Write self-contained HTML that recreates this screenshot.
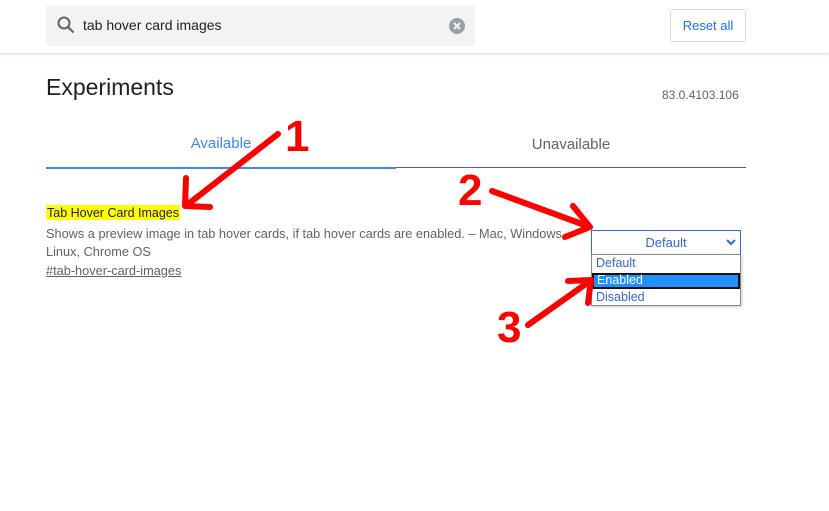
<!DOCTYPE html>
<html><head><style>
body{margin:0;width:829px;height:511px;background:#fff;font-family:"Liberation Sans",Arial,sans-serif;position:relative;overflow:hidden}
.a{position:absolute}
</style></head><body>
<div class="a" style="left:0;top:0;width:829px;height:53px;background:#fff;border-bottom:1px solid #e3e3e3;box-shadow:0 1px 3px rgba(0,0,0,.08)"></div>
<div class="a" style="left:46px;top:5px;width:429px;height:41px;background:#f1f3f4;border-radius:3px"></div>
<svg class="a" style="left:56px;top:15px" width="20" height="20" viewBox="0 0 20 20"><circle cx="8" cy="8" r="5.5" fill="none" stroke="#5f6368" stroke-width="2"/><line x1="12" y1="12" x2="17.5" y2="17.5" stroke="#5f6368" stroke-width="2.2"/></svg>
<div class="a" style="left:83px;top:17px;font-size:14px;color:#202124">tab hover card images</div>
<svg class="a" style="left:448px;top:17px" width="18" height="18" viewBox="0 0 18 18"><circle cx="9" cy="9" r="8" fill="#9aa0a6"/><path d="M6 6L12 12M12 6L6 12" stroke="#f1f3f4" stroke-width="2"/></svg>
<div class="a" style="left:670px;top:9px;width:74px;height:31px;border:1px solid #dadce0;border-radius:3px;color:#1a73e8;font-size:13px;line-height:31px;text-align:center">Reset all</div>
<div class="a" style="left:46px;top:74px;font-size:23px;color:#202124">Experiments</div>
<div class="a" style="left:662px;top:88px;font-size:12px;color:#5f6368">83.0.4103.106</div>
<div class="a" style="left:46px;top:135px;width:350px;text-align:center;font-size:15px;color:#4285f4">Available</div>
<div class="a" style="left:396px;top:136px;width:350px;text-align:center;font-size:15px;color:#5f6368">Unavailable</div>
<div class="a" style="left:46px;top:167px;width:350px;height:2px;background:#4285f4"></div>
<div class="a" style="left:396px;top:167px;width:350px;height:1px;background:#5f6368"></div>
<div class="a" style="left:46px;top:205px;height:15px;padding:0 1px;background:#ffff00;font-size:12.5px;line-height:16px;color:#202124">Tab Hover Card Images</div>
<div class="a" style="left:46px;top:225px;font-size:12.75px;line-height:18px;color:#5f6368;width:560px">Shows a preview image in tab hover cards, if tab hover cards are enabled. – Mac, Windows,<br>Linux, Chrome OS</div>
<div class="a" style="left:46px;top:263px;font-size:12.75px;color:#5f6368;text-decoration:underline">#tab-hover-card-images</div>
<div class="a" style="left:591px;top:230px;border:1px solid #3367d6;box-sizing:border-box;width:150px;height:25px;font-size:13px;color:#3367d6;line-height:23px;text-align:center">Default</div>
<svg class="a" style="left:726px;top:238px" width="10" height="8" viewBox="0 0 10 8"><path d="M1 2L5 6L9 2" fill="none" stroke="#3367d6" stroke-width="2"/></svg>
<div class="a" style="left:591px;top:254px;width:150px;height:52px;border:1px solid #888;box-sizing:border-box;box-shadow:1px 1px 3px rgba(0,0,0,.2);background:#fff"></div>
<div class="a" style="left:596px;top:256px;font-size:12.5px;color:#3367d6">Default</div>
<div class="a" style="left:592px;top:273px;width:148px;height:16px;background:#1e90ff;border:2px solid #111;box-sizing:border-box"></div>
<div class="a" style="left:597px;top:273px;font-size:12.5px;color:#fff">Enabled</div>
<div class="a" style="left:596px;top:290px;font-size:12.5px;color:#3367d6">Disabled</div>
<svg class="a" style="left:0;top:0" width="829" height="511" viewBox="0 0 829 511">
<g stroke="#ff0000" stroke-width="6" fill="none" stroke-linecap="round" stroke-linejoin="round">
<path d="M278 134L187 205M186 178L185 206L210 207"/>
<path d="M492 191L590 227M573 206L590 227L565 237"/>
<path d="M528 325L590 281M568 281L591 280L588 303"/>
</g>
<g fill="#ff0000" font-family="Liberation Sans,Arial,sans-serif" font-weight="bold" font-size="44">
<text x="285" y="151" transform="scale(1,1)">1</text>
<text x="458" y="205">2</text>
<text x="497" y="342">3</text>
</g>
</svg>
</body></html>
